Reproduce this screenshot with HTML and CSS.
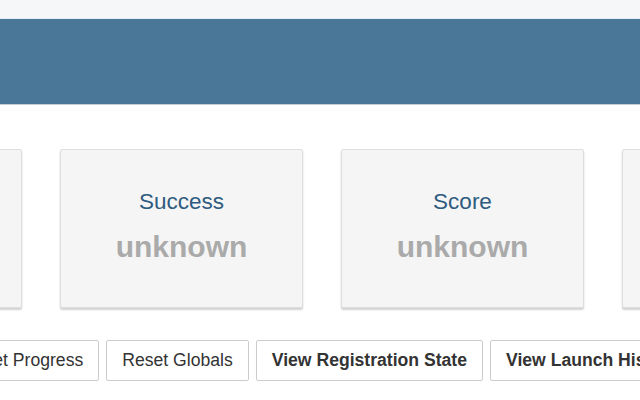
FILE: index.html
```html
<!DOCTYPE html>
<html lang="en">
<head>
  <meta charset="UTF-8" />
  <title>Registration</title>
  <link rel="stylesheet" href="styles.css">
</head>
<body>
  <div class="topbar"></div>
  <div class="banner"></div>

  <div class="stats">
    <div class="stat"></div>
    <div class="stat">
      <div class="stat-label">Success</div>
      <div class="stat-value">unknown</div>
    </div>
    <div class="stat">
      <div class="stat-label">Score</div>
      <div class="stat-value">unknown</div>
    </div>
    <div class="stat"></div>
  </div>

  <div class="actions">
    <button class="btn">Reset Progress</button>
    <button class="btn">Reset Globals</button>
    <button class="btn btn-strong">View Registration State</button>
    <button class="btn btn-strong">View Launch History</button>
  </div>
</body>
</html>
```

FILE: styles.css
```css
* {
  box-sizing: border-box;
}

body {
  margin: 0;
  background: #ffffff;
  font-family: "Liberation Sans", Arial, sans-serif;
  overflow: hidden;
  width: 640px;
  height: 400px;
}

.topbar {
  height: 19px;
  background: #f6f7f8;
  border-bottom: 1px solid #e3eef6;
}

.banner {
  height: 86px;
  background: #4a7698;
  border-bottom: 1px solid #c5ccd2;
}

.stats {
  display: flex;
  gap: 38px;
  margin: 44px 0 0 -221px;
}

.stat {
  flex: 0 0 243px;
  height: 159px;
  background: #f5f5f5;
  border: 1px solid #dedede;
  border-radius: 2px;
  box-shadow: 0 2px 2px rgba(0, 0, 0, 0.18);
  display: flex;
  flex-direction: column;
  align-items: center;
  padding-top: 39px;
}

.stat-label {
  font-size: 22.5px;
  color: #2e5b80;
  line-height: 26px;
}

.stat-value {
  margin-top: 15px;
  font-size: 30px;
  font-weight: bold;
  color: #aaaaaa;
  line-height: 34px;
}

.actions {
  display: flex;
  gap: 7px;
  margin: 32px 0 0 -54px;
  white-space: nowrap;
  overflow: hidden;
}

.btn {
  flex: none;
  font-family: inherit;
  font-size: 17.6px;
  color: #333333;
  background: #ffffff;
  border: 1px solid #cccccc;
  border-radius: 2px;
  padding: 0 15px;
  height: 41px;
}

.btn-strong {
  font-weight: bold;
  font-size: 17.6px;
}
```
